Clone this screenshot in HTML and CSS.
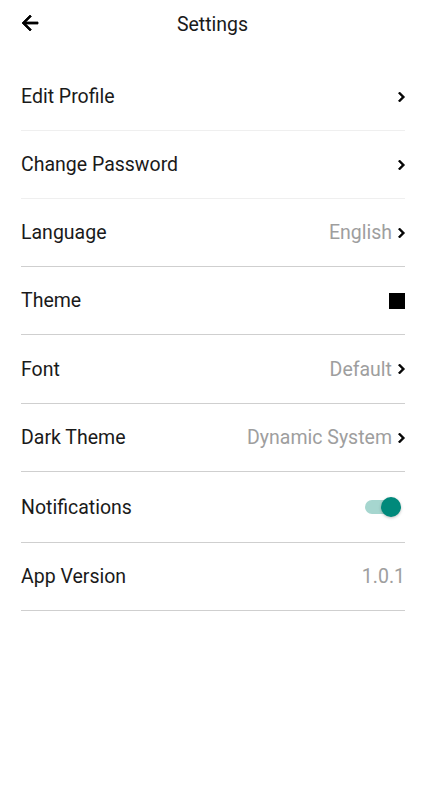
FILE: index.html
```html
<!DOCTYPE html>
<html lang="en">
<head>
  <meta charset="UTF-8" />
  <meta name="viewport" content="width=device-width, initial-scale=1.0" />
  <title>Settings</title>
  <link rel="stylesheet" href="styles.css">
</head>
<body>
  <div class="header">
    <button class="back-btn" aria-label="Back">
      <svg width="24" height="24" viewBox="0 0 24 24"><path d="M20 11H7.83l5.59-5.59L12 4l-8 8 8 8 1.41-1.41L7.83 13H20v-2z" fill="#000" stroke="#000" stroke-width="0.8"/></svg>
    </button>
    <h1>Settings</h1>
  </div>

  <div class="settings-list">
    <div class="row light">
      <span class="label">Edit Profile</span>
      <span class="right">
        <svg class="chevron" viewBox="8 6 8.5 12"><path d="M10 6L8.59 7.41 13.17 12l-4.58 4.59L10 18l6-6z" fill="#000" stroke="#000" stroke-width="1"/></svg>
      </span>
    </div>
    <div class="row light">
      <span class="label">Change Password</span>
      <span class="right">
        <svg class="chevron" viewBox="8 6 8.5 12"><path d="M10 6L8.59 7.41 13.17 12l-4.58 4.59L10 18l6-6z" fill="#000" stroke="#000" stroke-width="1"/></svg>
      </span>
    </div>
    <div class="row">
      <span class="label">Language</span>
      <span class="right">
        <span class="value">English</span>
        <svg class="chevron" viewBox="8 6 8.5 12"><path d="M10 6L8.59 7.41 13.17 12l-4.58 4.59L10 18l6-6z" fill="#000" stroke="#000" stroke-width="1"/></svg>
      </span>
    </div>
    <div class="row">
      <span class="label">Theme</span>
      <span class="right"><span class="swatch"></span></span>
    </div>
    <div class="row wide">
      <span class="label">Font</span>
      <span class="right">
        <span class="value">Default</span>
        <svg class="chevron" viewBox="8 6 8.5 12"><path d="M10 6L8.59 7.41 13.17 12l-4.58 4.59L10 18l6-6z" fill="#000" stroke="#000" stroke-width="1"/></svg>
      </span>
    </div>
    <div class="row">
      <span class="label">Dark Theme</span>
      <span class="right">
        <span class="value">Dynamic System</span>
        <svg class="chevron" viewBox="8 6 8.5 12"><path d="M10 6L8.59 7.41 13.17 12l-4.58 4.59L10 18l6-6z" fill="#000" stroke="#000" stroke-width="1"/></svg>
      </span>
    </div>
    <div class="row tall">
      <span class="label">Notifications</span>
      <span class="right">
        <span class="switch on"><span class="thumb"></span></span>
      </span>
    </div>
    <div class="row">
      <span class="label">App Version</span>
      <span class="right"><span class="value">1.0.1</span></span>
    </div>
  </div>
</body>
</html>
```

FILE: styles.css
```css
body {
  margin: 0;
  padding: 0;
  font-family: Roboto, 'Noto Sans', sans-serif;
  background: #fff;
  color: #1a1a1a;
}
.header {
  position: relative;
  height: 48px;
  display: flex;
  align-items: center;
  justify-content: center;
}
.back-btn {
  position: absolute;
  left: 18px;
  top: 11px;
  padding: 0;
  border: none;
  background: none;
  display: flex;
}
.header h1 {
  margin: 0;
  font-size: 19.5px;
  font-weight: 400;
  color: #1a1a1a;
}
.settings-list {
  margin: 15px 20px 0 21px;
}
.row {
  height: 67px;
  display: flex;
  align-items: center;
  justify-content: space-between;
  border-bottom: 1px solid #cfcfcf;
  font-size: 19.5px;
}
.row.light {
  border-bottom-color: #efefef;
}
.row.wide {
  height: 68px;
}
.row.tall {
  height: 70px;
}
.right {
  display: flex;
  align-items: center;
  gap: 6px;
}
.value {
  color: #9e9e9e;
}
.chevron {
  width: 7px;
  height: 10px;
}
.swatch {
  width: 16px;
  height: 16px;
  background: #000;
}
.switch {
  position: relative;
  width: 32px;
  height: 14px;
  border-radius: 7px;
  background: #a6d6cf;
  margin-right: 8px;
}
.switch .thumb {
  position: absolute;
  right: -4px;
  top: -3px;
  width: 20px;
  height: 20px;
  border-radius: 50%;
  background: #00897b;
  box-shadow: 0 1px 3px rgba(0, 0, 0, 0.25);
}
```
